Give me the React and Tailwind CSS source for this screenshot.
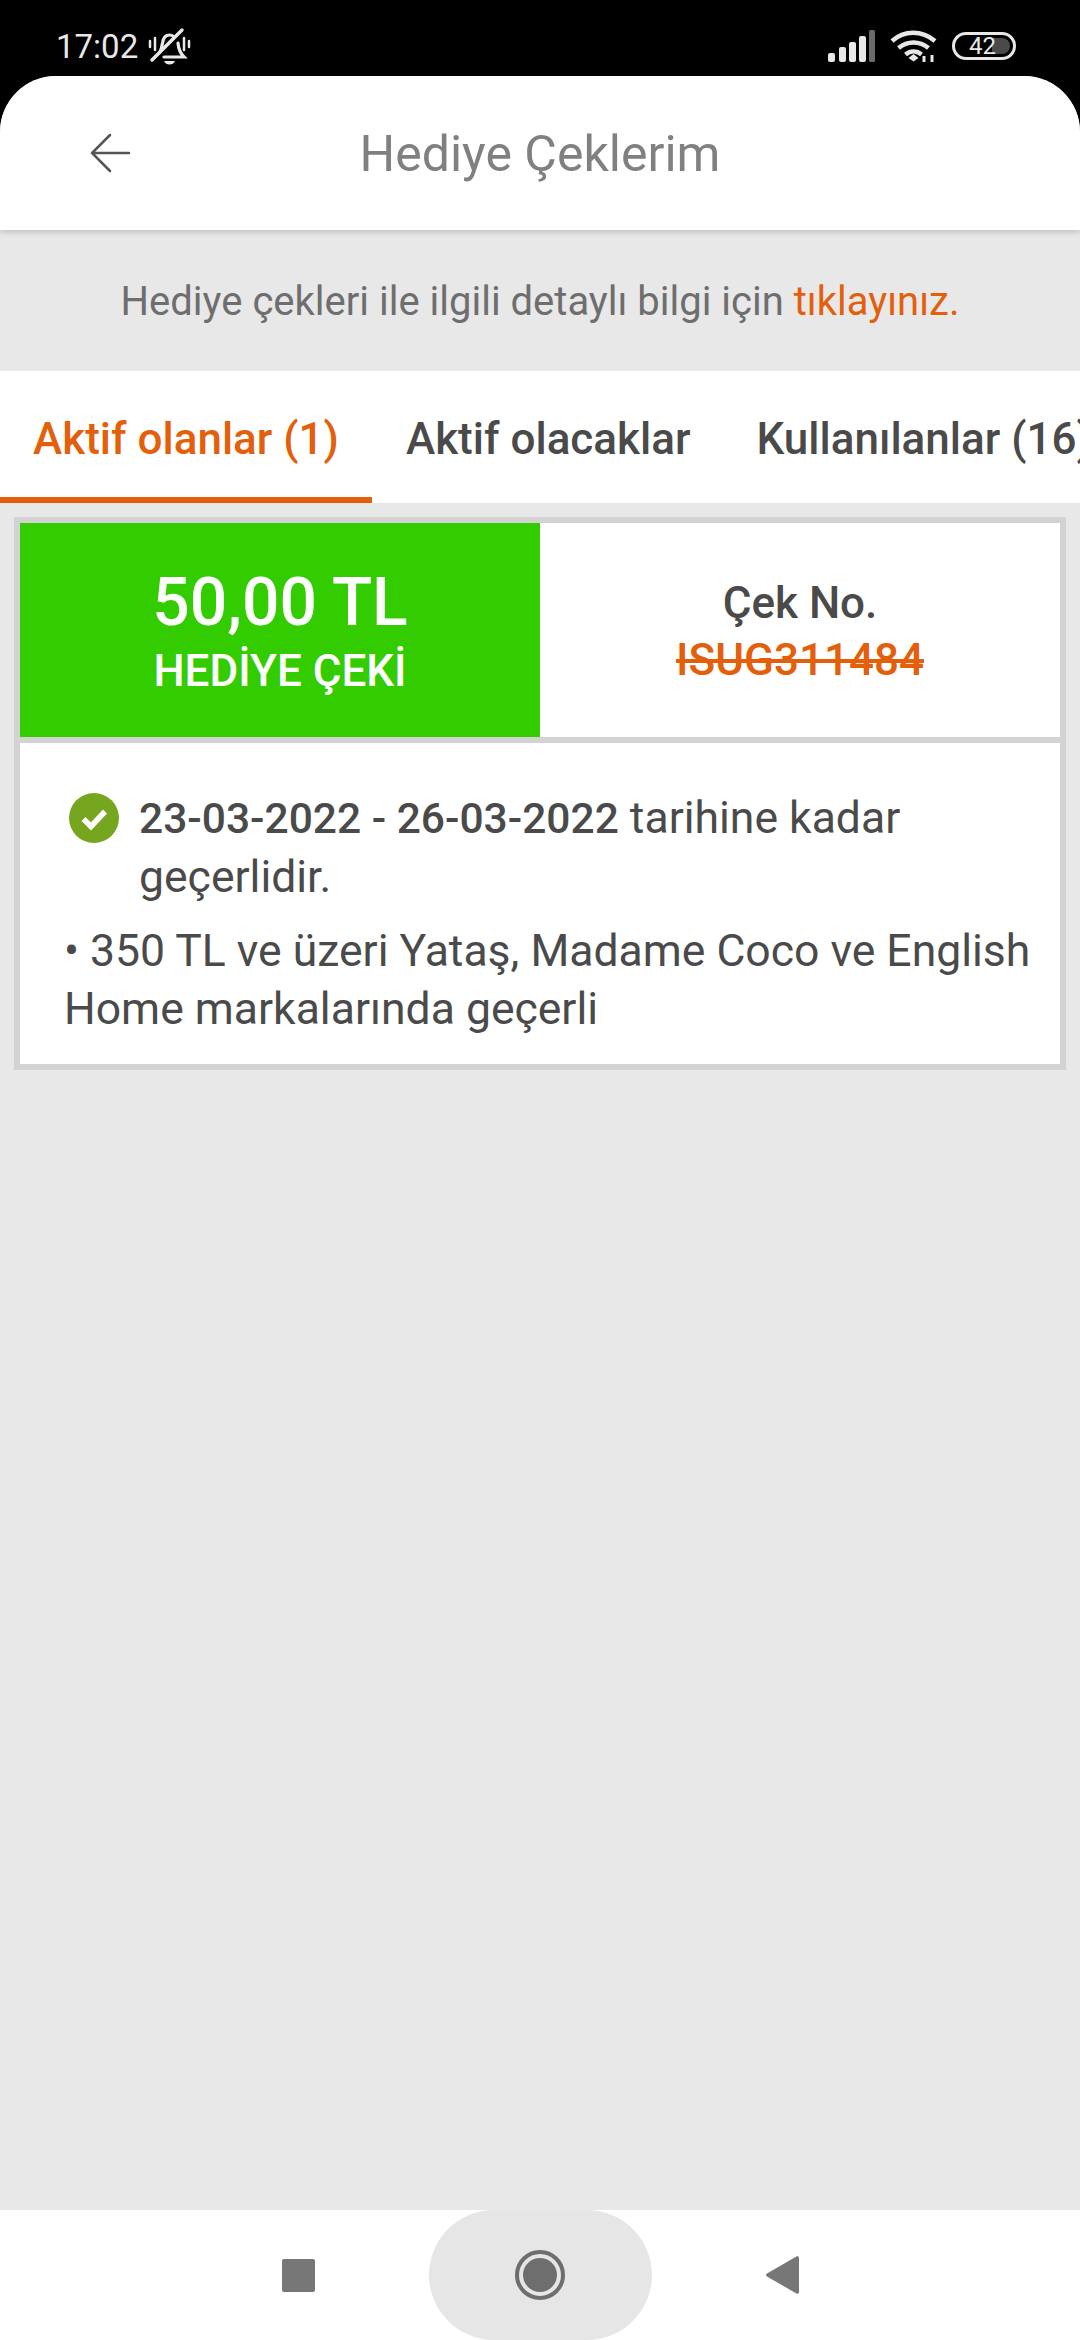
const BellOff = () => (
  <svg width="44" height="40" viewBox="0 0 44 40" fill="none" stroke="#e8e8e8" strokeLinecap="round">
    <path d="M3 15v6M8 12v12M37 12v12M42 15v6" strokeWidth="2.500" />
    <path d="M13 26c1.500-3 2-6 2.500-9 .7-5 3-8 7-8 2 0 3.500.7 4.500 2M31 17c.5 6 2 10 6 14H17" strokeWidth="3.200" />
    <path d="M17 35h11c-1 2.500-3 3.500-5.500 3.500S18 37.500 17 35z" fill="#e8e8e8" stroke="none" />
    <path d="M5 34 35 4" strokeWidth="3.500" />
  </svg>
);

const Signal = () => (
  <svg width="48" height="32" viewBox="0 0 48 32" fill="#e8e8e8">
    <rect x="0" y="23" width="7" height="9" rx="2" />
    <rect x="11" y="17" width="7" height="15" rx="2" />
    <rect x="21" y="12" width="7" height="20" rx="2" />
    <rect x="31" y="6" width="7" height="26" rx="2" />
    <rect x="41" y="0" width="6" height="32" rx="1.500" fill="#6a6a6a" />
  </svg>
);

const Wifi = () => (
  <svg width="48" height="36" viewBox="0 0 48 36" fill="none" stroke="#e8e8e8" strokeWidth="4.500">
    <path d="M2 13C14 2 32 2 45 13" />
    <path d="M8.500 20c9-7.500 21-7.500 30 0" />
    <path d="M15.500 26.500c5-4 11-4 16 0" />
    <path d="M18.500 30 23.500 26l5 4-5 3.500z" fill="#e8e8e8" stroke="none" />
    <path d="M34 28v6M42 27v7" strokeWidth="3" />
  </svg>
);

const Battery = () => (
  <div className="relative flex h-[28px] w-[64px] items-center justify-center overflow-hidden rounded-full border-[3px] border-[#e8e8e8] pr-[3px]">
    <div className="absolute inset-y-[3px] right-[3px] w-[18px] rounded-r-full bg-[#4a4a4a]" />
    <span className="relative text-[24px] leading-none text-[#e8e8e8]">42</span>
  </div>
);

const BackArrow = () => (
  <svg width="42" height="42" viewBox="0 0 42 42" fill="none" stroke="#555555" strokeWidth="2.500" strokeLinecap="round">
    <path d="M2 21h37M20 3 2 21l18 18" />
  </svg>
);

const CheckBadge = () => (
  <svg width="50" height="50" viewBox="0 0 50 50" className="shrink-0">
    <circle cx="25" cy="25" r="25" fill="#76a51f" />
    <path d="M14.500 26l7.500 7.500L36 18.500" fill="none" stroke="#ffffff" strokeWidth="5.500" />
  </svg>
);

const App = () => {
  return (
    <div className="flex h-screen flex-col overflow-hidden bg-black font-['Roboto',sans-serif]">
      <div className="flex h-[76px] shrink-0 items-center justify-between pl-[56px] pr-[64px] pt-[16px]">
        <div className="flex items-center gap-[9px]">
          <span className="text-[33px] leading-none text-[#e8e8e8]">17:02</span>
          <BellOff />
        </div>
        <div className="flex items-center gap-[14px]">
          <Signal />
          <Wifi />
          <Battery />
        </div>
      </div>

      <div className="flex flex-1 flex-col overflow-hidden rounded-t-[56px] bg-[#e8e8e8]">
        <div className="relative z-10 flex h-[154px] shrink-0 items-center justify-center bg-white pt-[2px] shadow-[0_2px_6px_rgba(0,0,0,0.18)]">
          <div className="absolute left-[90px] top-[56px]">
            <BackArrow />
          </div>
          <h1 className="text-[50px] font-normal text-[#808080]">Hediye Çeklerim</h1>
        </div>

        <p className="flex h-[141px] shrink-0 items-center justify-center pt-[2px] text-[40px] text-[#6e6e6e]">
          Hediye çekleri ile ilgili detaylı bilgi için&nbsp;
          <span className="text-[#e35f0b]">tıklayınız.</span>
        </p>

        <div className="flex h-[132px] shrink-0 overflow-hidden whitespace-nowrap bg-white text-[44px] font-medium text-[#4a4a4a]">
          <div className="flex w-[372px] shrink-0 items-center justify-center border-b-[6px] border-[#e35f0b] pt-[9px] text-[#e35f0b]">
            Aktif olanlar (1)
          </div>
          <div className="flex shrink-0 items-center pl-[34px] pt-[3px]">Aktif olacaklar</div>
          <div className="flex shrink-0 items-center pl-[66px] pt-[3px]">Kullanılanlar (16)</div>
        </div>

        <div className="mx-[14px] mt-[14px] border-[6px] border-[#d3d3d3] bg-white">
          <div className="box-content flex h-[214px] border-b-[6px] border-[#d3d3d3]">
            <div className="flex w-1/2 flex-col items-center justify-center bg-[#33cc00] pt-[2px] text-white">
              <div className="text-[66px] font-medium leading-[80px]">50,00 TL</div>
              <div className="text-[44px] font-medium leading-[56px]">HEDİYE ÇEKİ</div>
            </div>
            <div className="flex w-1/2 flex-col items-center justify-center">
              <div className="text-[44px] font-medium leading-[60px] text-[#4a4a4a]">Çek No.</div>
              <div className="text-[44px] font-medium leading-[54px] text-[#e35f0b] line-through">ISUG311484</div>
            </div>
          </div>
          <div className="pb-[26px] pl-[44px] pr-[20px] pt-[46px] text-[44.5px] leading-[58px] text-[#4a4a4a]">
            <div className="flex gap-[20px] pl-[5px]">
              <div className="pt-[4px]">
                <CheckBadge />
              </div>
              <p>
                <span className="text-[42.5px] font-medium">23-03-2022 - 26-03-2022</span> tarihine kadar
                <br />
                geçerlidir.
              </p>
            </div>
            <p className="mt-[16px]">• 350 TL ve üzeri Yataş, Madame Coco ve English Home markalarında geçerli</p>
          </div>
        </div>
      </div>

      <div className="flex h-[130px] shrink-0 items-center justify-center gap-[114px] bg-white">
        <div className="h-[33px] w-[33px] rounded-[2px] bg-[#777777]" />
        <div className="flex h-[130px] w-[223px] items-center justify-center rounded-[65px] bg-[#e6e6e6]">
          <div className="flex h-[50px] w-[50px] items-center justify-center rounded-full border-[4px] border-[#6e6e6e]">
            <div className="h-[34px] w-[34px] rounded-full bg-[#6e6e6e]" />
          </div>
        </div>
        <svg width="33" height="38" viewBox="0 0 33 38" fill="#777777">
          <path d="M33 2v34c0 1.500-1.500 2.200-3 1.200L1 20.500c-1.300-.8-1.300-2.200 0-3L30 .8C31.500-.2 33 .5 33 2z" />
        </svg>
      </div>
    </div>
  );
};

export default App;
